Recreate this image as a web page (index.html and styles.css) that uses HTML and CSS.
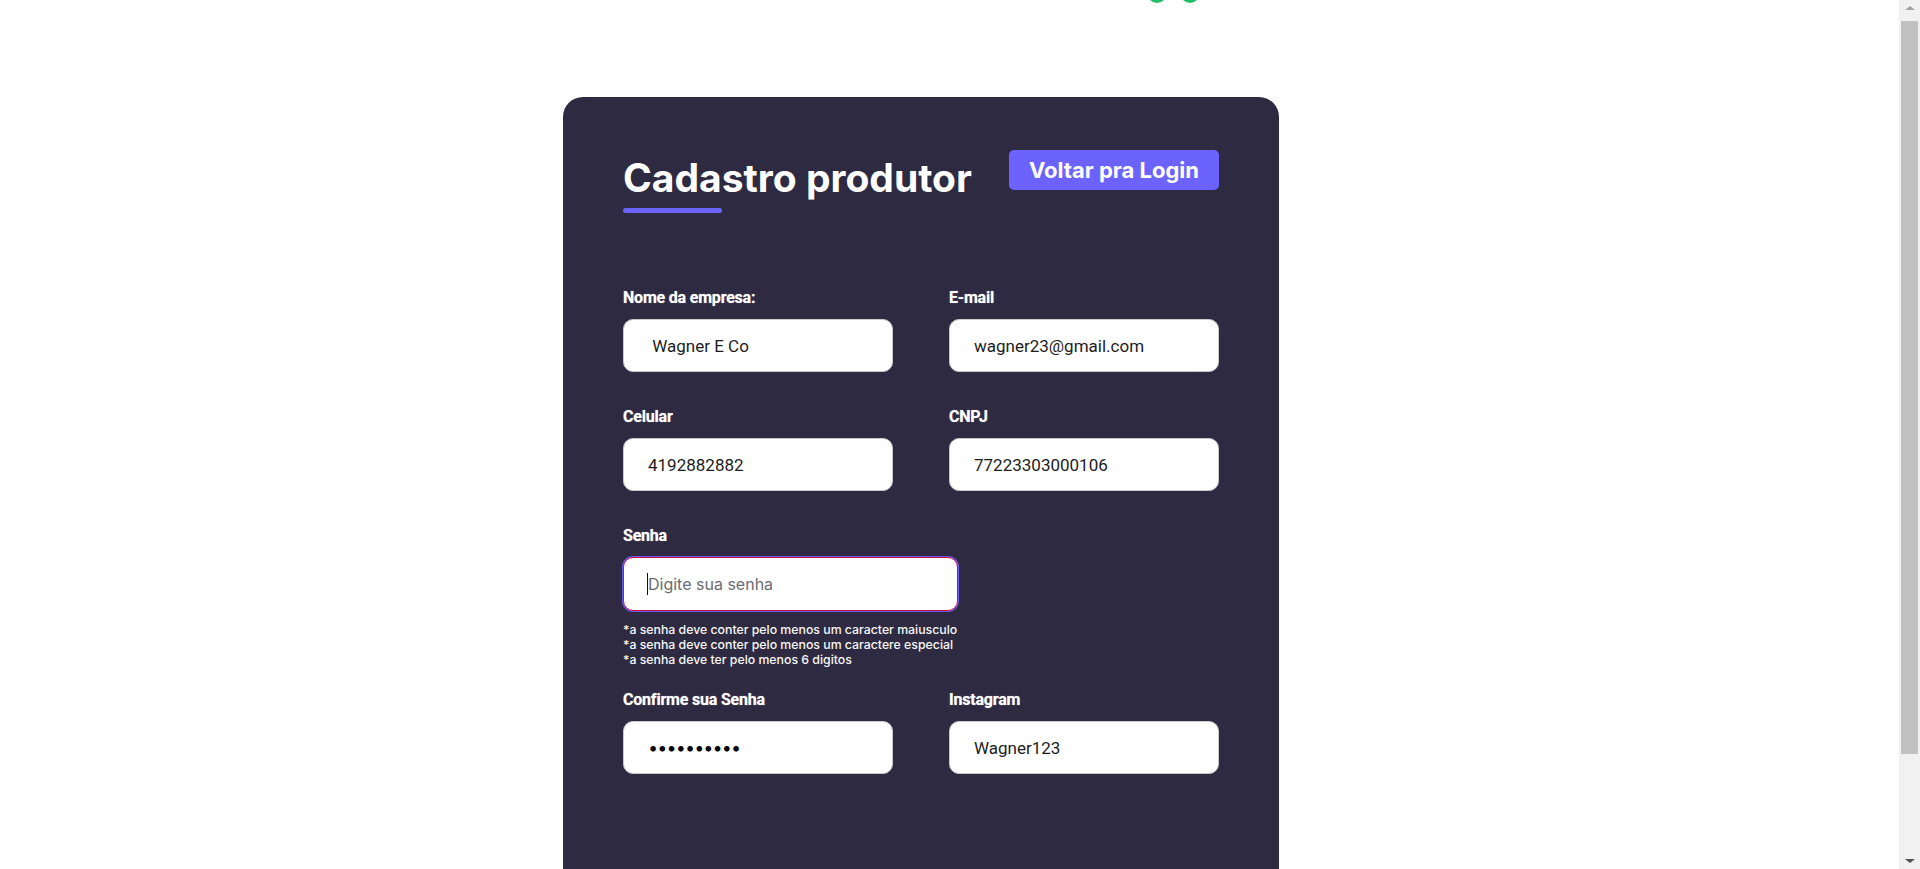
FILE: index.html
```html
<!DOCTYPE html>
<html lang="pt-BR">
<head>
<meta charset="utf-8">
<title>Cadastro produtor</title>
<link rel="stylesheet" href="styles.css">
</head>
<body>
<div class="top-logo">
  <span class="dot"></span>
  <span class="dot"></span>
</div>
<main class="card">
  <div class="card-head">
    <div class="title-wrap">
      <h1 class="title">Cadastro produtor</h1>
      <div class="title-bar"></div>
    </div>
    <button class="back-btn" type="button">Voltar pra Login</button>
  </div>

  <form class="form">
    <div class="row">
      <div class="field">
        <label class="label">Nome da empresa:</label>
        <input class="input" type="text" value=" Wagner E Co">
      </div>
      <div class="field">
        <label class="label">E-mail</label>
        <input class="input" type="text" value="wagner23@gmail.com">
      </div>
    </div>
    <div class="row">
      <div class="field">
        <label class="label">Celular</label>
        <input class="input" type="text" value="4192882882">
      </div>
      <div class="field">
        <label class="label">CNPJ</label>
        <input class="input" type="text" value="77223303000106">
      </div>
    </div>
    <div class="row single">
      <div class="field wide">
        <label class="label">Senha</label>
        <div class="focus-wrap">
          <span class="caret"></span>
          <input class="input input-focus" type="password" placeholder="Digite sua senha">
        </div>
        <p class="hints">*a senha deve conter pelo menos um caracter maiusculo<br>*a senha deve conter pelo menos um caractere especial<br>*a senha deve ter pelo menos 6 digitos</p>
      </div>
    </div>
    <div class="row">
      <div class="field">
        <label class="label">Confirme sua Senha</label>
        <input class="input pw" type="password" value="1234567890">
      </div>
      <div class="field">
        <label class="label">Instagram</label>
        <input class="input" type="text" value="Wagner123">
      </div>
    </div>
  </form>
</main>

<div class="fake-scrollbar" aria-hidden="true">
  <span class="sb-arrow sb-up"></span>
  <span class="sb-thumb"></span>
  <span class="sb-arrow sb-down"></span>
</div>
</body>
</html>
```

FILE: styles.css
```css
html, body {
  margin: 0;
  padding: 0;
  background: #ffffff;
}

body {
  font-family: "Inter", "Roboto", sans-serif;
  padding-bottom: 10px;
}

.top-logo {
  display: flex;
  gap: 13px;
  height: 3px;
  padding-left: 1147px;
  overflow: visible;
}

.dot {
  display: block;
  width: 20px;
  height: 20px;
  border-radius: 50%;
  background: #21c064;
  margin-top: -17px;
}

.card {
  width: 716px;
  box-sizing: border-box;
  margin: 94px 0 0 563px;
  min-height: 880px;
  background: #2e2a41;
  border-radius: 20px;
  padding: 53px 60px 60px 60px;
}

.card-head {
  display: flex;
  justify-content: space-between;
  align-items: flex-start;
}

.title-wrap {
  padding-top: 4px;
}

.title {
  margin: 0;
  font-family: "Inter", sans-serif;
  font-weight: 700;
  font-size: 39px;
  line-height: 47px;
  color: #ffffff;
  letter-spacing: 0;
}

.title-bar {
  margin-top: 7px;
  width: 99px;
  height: 5px;
  border-radius: 3px;
  background: #6c63ff;
}

.back-btn {
  width: 210px;
  height: 40px;
  border: none;
  border-radius: 5px;
  background: #6c63ff;
  color: #ffffff;
  font-family: "Inter", sans-serif;
  font-weight: 700;
  font-size: 22px;
  padding: 0;
  cursor: pointer;
}

.form {
  margin-top: 75px;
  display: flex;
  flex-direction: column;
  gap: 35px;
}

.row {
  display: grid;
  grid-template-columns: 270px 270px;
  column-gap: 56px;
}

.row.single {
  grid-template-columns: 335px;
  gap: 0;
  margin-bottom: -12px;
}

.field {
  display: flex;
  flex-direction: column;
}

.label {
  font-family: "Roboto", sans-serif;
  font-weight: 700;
  font-size: 16px;
  line-height: 19px;
  color: #ffffff;
  letter-spacing: -0.2px;
  margin-bottom: 12px;
  text-shadow: 0 0 1px rgba(255, 255, 255, 0.6);
}

.input {
  box-sizing: border-box;
  height: 53px;
  width: 100%;
  border: 1px solid #c9c9c9;
  border-radius: 10px;
  background: #ffffff;
  padding: 0 24px;
  font-family: "Roboto", sans-serif;
  font-size: 17px;
  color: #1c1c1c;
  outline: none;
}

.focus-wrap {
  position: relative;
}

.caret {
  position: absolute;
  left: 24px;
  top: 16px;
  width: 1px;
  height: 22px;
  background: #111111;
  z-index: 1;
}

.input-focus {
  display: block;
  height: 54px;
  border: 1px solid #c8133f;
  box-shadow: 0 0 0 1px #6a5cf0;
}

.input-focus::placeholder {
  font-family: "Inter", sans-serif;
  font-size: 16px;
  color: #6b6b73;
}

.pw {
  font-family: "Inter", sans-serif;
  font-size: 18px;
  letter-spacing: -0.9px;
  color: #000000;
}

.hints {
  margin: 11px 0 0;
  font-family: "Inter", sans-serif;
  font-weight: 500;
  font-size: 12.3px;
  line-height: 15px;
  color: #f7f7f7;
  white-space: nowrap;
}

.fake-scrollbar {
  position: fixed;
  top: 0;
  right: 0;
  width: 21px;
  height: 100vh;
  background: #f1f1f1;
  display: flex;
  flex-direction: column;
  align-items: center;
}

.sb-arrow {
  display: block;
  width: 0;
  height: 0;
  border-left: 5px solid transparent;
  border-right: 5px solid transparent;
}

.sb-up {
  margin-top: 6px;
  border-bottom: 4px solid #a3a3a3;
}

.sb-thumb {
  display: block;
  margin-top: 11px;
  width: 17px;
  height: 733px;
  background: #c1c1c1;
}

.sb-down {
  margin-top: auto;
  margin-bottom: 6px;
  border-top: 4px solid #505050;
}
```
